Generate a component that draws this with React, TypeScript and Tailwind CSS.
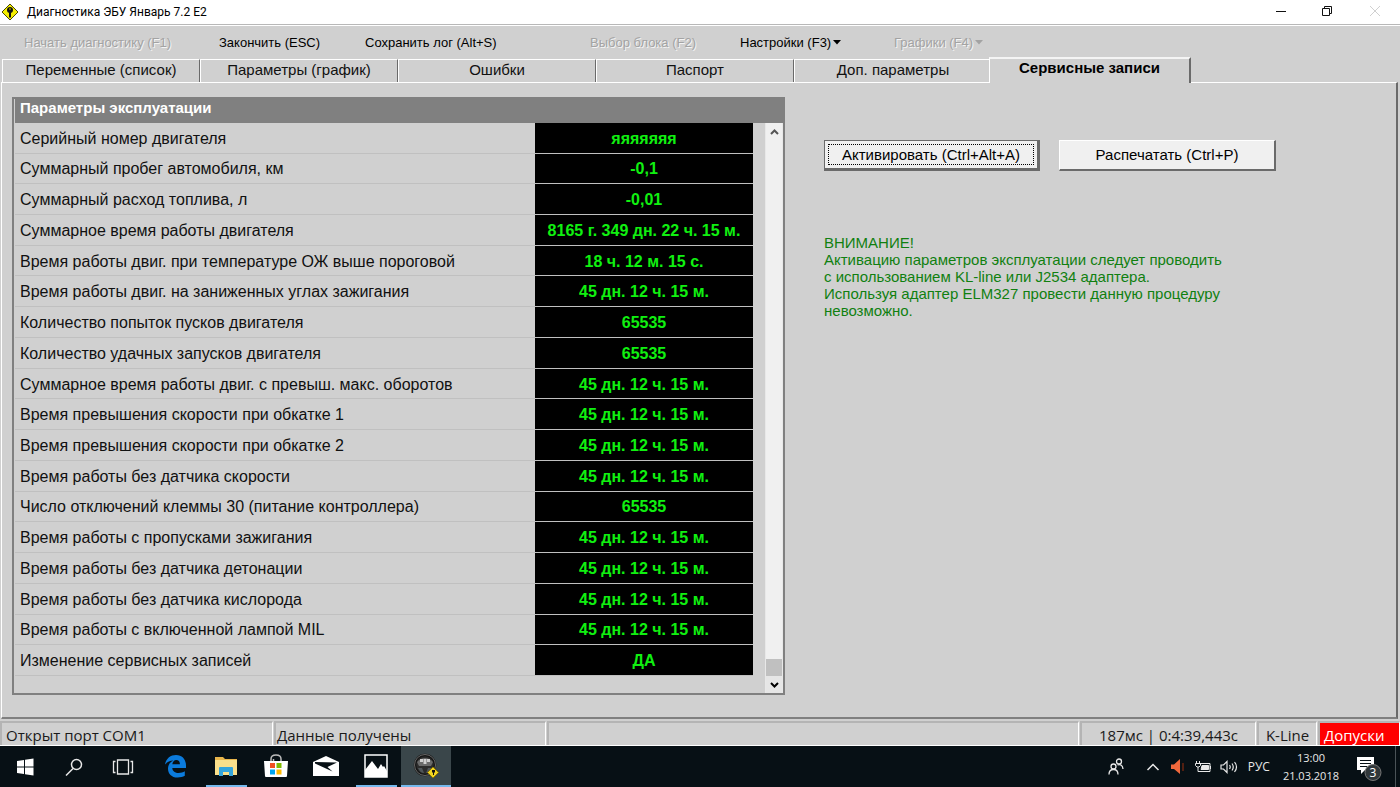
import { useState } from "react";

const sans = "font-['Liberation_Sans',Arial,sans-serif]";
const segoe = "font-['Open_Sans','Noto_Sans',sans-serif]";

const menu = [
  { label: "Начать диагностику (F1)", width: "w-[195px]", disabled: true, drop: false },
  { label: "Закончить (ESC)", width: "w-[146px]", disabled: false, drop: false },
  { label: "Сохранить лог (Alt+S)", width: "w-[225px]", disabled: false, drop: false },
  { label: "Выбор блока (F2)", width: "w-[150px]", disabled: true, drop: false },
  { label: "Настройки (F3)", width: "w-[154px]", disabled: false, drop: true },
  { label: "Графики (F4)", width: "w-[120px]", disabled: true, drop: true },
];

const tabs = [
  "Переменные (список)",
  "Параметры (график)",
  "Ошибки",
  "Паспорт",
  "Доп. параметры",
  "Сервисные записи",
];

const rows = [
  ["Серийный номер двигателя", "яяяяяяя"],
  ["Суммарный пробег автомобиля, км", "-0,1"],
  ["Суммарный расход топлива, л", "-0,01"],
  ["Суммарное время работы двигателя", "8165 г. 349 дн. 22 ч. 15 м."],
  ["Время работы двиг. при температуре ОЖ выше пороговой", "18 ч. 12 м. 15 с."],
  ["Время работы двиг. на заниженных углах зажигания", "45 дн. 12 ч. 15 м."],
  ["Количество попыток пусков двигателя", "65535"],
  ["Количество удачных запусков двигателя", "65535"],
  ["Суммарное время работы двиг. с превыш. макс. оборотов", "45 дн. 12 ч. 15 м."],
  ["Время превышения скорости при обкатке 1", "45 дн. 12 ч. 15 м."],
  ["Время превышения скорости при обкатке 2", "45 дн. 12 ч. 15 м."],
  ["Время работы без датчика скорости", "45 дн. 12 ч. 15 м."],
  ["Число отключений клеммы 30 (питание контроллера)", "65535"],
  ["Время работы с пропусками зажигания", "45 дн. 12 ч. 15 м."],
  ["Время работы без датчика детонации", "45 дн. 12 ч. 15 м."],
  ["Время работы без датчика кислорода", "45 дн. 12 ч. 15 м."],
  ["Время работы с включенной лампой MIL", "45 дн. 12 ч. 15 м."],
  ["Изменение сервисных записей", "ДА"],
];

function AppIcon() {
  return (
    <svg width="18" height="18" viewBox="0 0 18 18" aria-hidden="true">
      <path d="M9 1 17 9 9 17 1 9Z" fill="#f4ee00" stroke="#4a4800" strokeWidth="1" />
      <circle cx="9" cy="7" r="3" fill="#111" />
      <path d="M8 8h2v6l-1 1-1-1Z" fill="#111" />
      <circle cx="9" cy="6" r="1" fill="#8a8600" />
    </svg>
  );
}

function TitleBar() {
  return (
    <header className="flex h-[24px] items-center bg-white pl-[1px] font-['Roboto','Noto_Sans',sans-serif] text-black">
      <AppIcon />
      <h1 className="ml-[8px] text-[12px] leading-[16px]">Диагностика ЭБУ Январь 7.2 E2</h1>
      <div className="ml-auto flex pb-[3px]">
        <button aria-label="Свернуть" className="flex w-[46px] items-center justify-center">
          <svg width="12" height="12" viewBox="0 0 12 12">
            <path d="M1 6.500h10" stroke="#111" />
          </svg>
        </button>
        <button aria-label="Развернуть" className="flex w-[46px] items-center justify-center">
          <svg width="12" height="12" viewBox="0 0 12 12" fill="none" stroke="#111">
            <path d="M1.500 3.500h7v7h-7zM3.500 3.500v-2h7v7h-2" />
          </svg>
        </button>
        <button aria-label="Закрыть" className="flex w-[50px] items-center justify-center">
          <svg width="12" height="12" viewBox="0 0 12 12" stroke="#d0d0d0">
            <path d="M1 1l10 10M11 1 1 11" />
          </svg>
        </button>
      </div>
    </header>
  );
}

function MenuBar() {
  return (
    <nav className="flex h-[32px] items-center border-t border-white pt-[2px] pl-[24px] text-[13px] leading-[16px]">
      {menu.map((item) => (
        <div key={item.label} className={item.width}>
          <button
            disabled={item.disabled}
            className="flex items-center gap-[2px] whitespace-nowrap text-black disabled:text-[#a3a3a3] disabled:[text-shadow:1px_1px_0_#f4f4f4]"
          >
            {item.label}
            {item.drop && (
              <svg width="8" height="5" viewBox="0 0 8 5" fill="currentColor" aria-hidden="true">
                <path d="M0 0h8L4 4.500Z" />
              </svg>
            )}
          </button>
        </div>
      ))}
    </nav>
  );
}

function Tabs({ active, onSelect }: { active: number; onSelect: (i: number) => void }) {
  return (
    <div role="tablist" className="flex h-[25px] items-end pl-[2px] text-[15px] leading-[18px]">
      {tabs.map((tab, i) =>
        i === active ? (
          <button
            key={tab}
            role="tab"
            aria-selected="true"
            onClick={() => onSelect(i)}
            className="z-10 -mb-px -ml-[3px] h-[26px] w-[202px] border-t-2 border-r-2 border-l border-t-[#f4f4f4] border-r-[#6a6a6a] border-l-white bg-[#d0d0d0] pb-[6px] font-bold"
          >
            {tab}
          </button>
        ) : (
          <button
            key={tab}
            role="tab"
            aria-selected="false"
            onClick={() => onSelect(i)}
            className="h-[23px] w-[198px] border-t border-r border-l border-t-white border-r-[#6a6a6a] border-l-white pb-[3px] text-[#111]"
          >
            {tab}
          </button>
        )
      )}
    </div>
  );
}

function ScrollBar() {
  return (
    <div className="flex w-[18px] shrink-0 flex-col border-x border-[#e8e8e8] bg-[#f0f0f0]">
      <button aria-label="Вверх" className="flex h-[18px] items-center justify-center">
        <svg width="9" height="6" viewBox="0 0 9 6" fill="none" stroke="#555" strokeWidth="2">
          <path d="M1 5l3.500-3.500L8 5" />
        </svg>
      </button>
      <div className="mt-auto h-[17px] bg-[#c0c0c0]" />
      <button aria-label="Вниз" className="flex h-[17px] items-center justify-center bg-[#e6e6e6]">
        <svg width="9" height="6" viewBox="0 0 9 6" fill="none" stroke="#000" strokeWidth="2">
          <path d="M1 1l3.500 3.500L8 1" />
        </svg>
      </button>
    </div>
  );
}

function ParamsPanel() {
  return (
    <section className="w-[773px] border-2 border-[#808080] text-[16px] leading-[18px]">
      <h2 className="ml-px h-[24px] bg-[#808080] pl-[5px] text-[15px] font-bold text-white">
        Параметры эксплуатации
      </h2>
      <div className="flex">
        <div className="flex-1 pr-[12px] pb-[17px] pl-px">
          <table className="h-[553px] w-full border-collapse">
            <tbody>
              {rows.map(([label, value]) => (
                <tr key={label} className="border-b border-[#c0c0c0]">
                  <th scope="row" className="pt-[2px] pl-[5px] text-left font-normal text-[#111]">
                    {label}
                  </th>
                  <td className="w-[218px] bg-black pt-[2px] text-center font-bold whitespace-nowrap text-[#10f010]">
                    {value}
                  </td>
                </tr>
              ))}
            </tbody>
          </table>
        </div>
        <ScrollBar />
      </div>
    </section>
  );
}

function SidePanel() {
  return (
    <aside className="pt-[43px]">
      <div className="flex gap-[19px] text-[15px] leading-[18px] text-black">
        <button className="h-[31px] w-[216px] border-t border-r-[3px] border-b-[3px] border-l border-[#6a6a6a] bg-[#f0f0f0] p-[3px]">
          <span className="flex h-full items-center justify-center border border-dotted border-black">
            Активировать (Ctrl+Alt+A)
          </span>
        </button>
        <button className="h-[31px] w-[217px] border-t border-r-2 border-b-2 border-l border-t-white border-r-[#6a6a6a] border-b-[#6a6a6a] border-l-white bg-[#f0f0f0]">
          Распечатать (Ctrl+P)
        </button>
      </div>
      <p className="mt-[63px] text-[15px] leading-[17px] text-[#108010]">
        ВНИМАНИЕ!
        <br />
        Активацию параметров эксплуатации следует проводить
        <br />
        с использованием KL-line или J2534 адаптера.
        <br />
        Используя адаптер ELM327 провести данную процедуру
        <br />
        невозможно.
      </p>
    </aside>
  );
}

function StatusBar() {
  const cell = "flex items-center border-t-2 border-l-2 border-t-[#b4b4b4] border-l-[#b4b4b4] border-r border-r-white pt-[2px] whitespace-nowrap";
  return (
    <footer
      className={`${segoe} flex h-[25px] gap-px border-b border-white text-[15px] leading-[20px] text-[#1a1a1a]`}
    >
      <div className={`${cell} w-[273px] pl-[4px]`}>Открыт порт COM1</div>
      <div className={`${cell} w-[272px] pl-px`}>Данные получены</div>
      <div className={`${cell} flex-1`} />
      <div className={`${cell} w-[176px] justify-center`}>187мс | 0:4:39,443с</div>
      <div className={`${cell} w-[60px] justify-center`}>K-Line</div>
      <div className={`${cell} w-[82px] bg-[#ff0000] pl-[4px] text-white`}>Допуски</div>
    </footer>
  );
}

function FolderIcon() {
  return (
    <svg width="24" height="22" viewBox="0 0 24 22">
      <path d="M1 2h8l2 2h12v16H1Z" fill="#e8b64c" />
      <path d="M1 5h22v15H1Z" fill="#fbe08b" />
      <path d="M5 21v-8q0-1 1-1h12q1 0 1 1v8h-4v-4H9v4Z" fill="#35a5dc" />
    </svg>
  );
}

function EdgeIcon() {
  return (
    <svg width="22" height="24" viewBox="0 0 22 24" fill="#0b7bdc">
      <path d="M0 10.500C1 4.500 5.500 1 11 1c6.500 0 10 4.600 10 10.500V14H7.300c.2 3.500 3 5 6.200 5 2.500 0 4.700-.8 6.300-1.700v4.500C18 22.900 15.500 23.500 12.600 23.500 6.500 23.500 3 19.700 3 14.700 3 11 5 8 8.300 6.500 4.800 6.600 2 8.200 0 10.500ZM7.400 10.200h7.500C14.900 7.600 13.600 6 11.300 6 9 6 7.600 7.800 7.400 10.200Z" />
    </svg>
  );
}

function StoreIcon() {
  return (
    <svg width="24" height="26" viewBox="0 0 24 26">
      <path d="M7 8V6q0-4 5-4t5 4v2M9.500 8V6" fill="none" stroke="#bbb" strokeWidth="1.500" />
      <path d="M0 8h24l-1 15q0 1-1 1H2q-1 0-1-1Z" fill="#fff" />
      <path d="M6 10h5v5H6Z" fill="#f05022" />
      <path d="M12.500 10h5v5h-5Z" fill="#7fba00" />
      <path d="M6 16.500h5v5H6Z" fill="#00a4ef" />
      <path d="M12.500 16.500h5v5h-5Z" fill="#ffb900" />
    </svg>
  );
}

function MailIcon() {
  return (
    <svg width="26" height="22" viewBox="0 0 26 22">
      <path d="M0 7 13 1l13 6v14H0Z" fill="#fff" />
      <path d="M2 7 24 7.500 14.500 12l5 4.500L2 8.500Z" fill="#071015" />
    </svg>
  );
}

function PhotosIcon() {
  return (
    <svg width="24" height="24" viewBox="0 0 24 24">
      <path d="M1 1h22v22H1Z" fill="#071015" stroke="#fff" strokeWidth="1.500" />
      <path d="M1 16 8 7l6 8 3-5 2 3 1-1 3 5v6H1Z" fill="#fff" />
    </svg>
  );
}

function WheelIcon() {
  return (
    <svg width="26" height="26" viewBox="0 0 26 26">
      <circle cx="12" cy="12" r="10" fill="#2c2c2c" stroke="#151515" strokeWidth="2.500" />
      <circle cx="12" cy="12" r="10.500" fill="none" stroke="#666" />
      <path d="M4 9q8-8 16 0l-2 4H6Z" fill="#6a6a6a" />
      <path d="M7 6h3v3H7zM14 6h3v3h-3zM10.500 6h3v5h-3z" fill="#d0d0d0" />
      <path d="M5 15h4l2 5q-4 0-6-5ZM19 15h-4l-2 5q4 0 6-5Z" fill="#4f5558" />
      <path d="M20 14l5.500 5.500L20 25l-5.500-5.500Z" fill="#f1d321" stroke="#8a7400" />
      <path d="M19 17h3v2l-1 1v2h-1v-2l-1-1Z" fill="#111" />
    </svg>
  );
}

const pinned = [
  { name: "Microsoft Edge", icon: <EdgeIcon />, state: "idle" },
  { name: "Проводник", icon: <FolderIcon />, state: "open" },
  { name: "Microsoft Store", icon: <StoreIcon />, state: "idle" },
  { name: "Почта", icon: <MailIcon />, state: "idle" },
  { name: "Фотографии", icon: <PhotosIcon />, state: "open" },
  { name: "Диагностика", icon: <WheelIcon />, state: "active" },
];

function Taskbar() {
  const shell = "flex w-[49px] items-center justify-center";
  return (
    <div className={`${segoe} flex h-[41px] bg-[#071015] text-[#e8e8e8]`}>
      <button aria-label="Пуск" className={shell}>
        <svg width="18" height="18" viewBox="0 0 18 18" fill="#fff">
          <path d="M1 3l7-1v6.500H1zM9 1.800 17.500.5v8H9zM1 9.500h7V16l-7-1zM9 9.500h8.500v8L9 16.200z" />
        </svg>
      </button>
      <button aria-label="Поиск" className={shell}>
        <svg width="18" height="18" viewBox="0 0 18 18" fill="none" stroke="#e8e8e8" strokeWidth="1.500">
          <circle cx="11.500" cy="6.500" r="5" />
          <path d="M8 10.500 1 17.500" />
        </svg>
      </button>
      <button aria-label="Представление задач" className={shell}>
        <svg width="22" height="18" viewBox="0 0 22 18" fill="none" stroke="#e8e8e8" strokeWidth="1.300">
          <path d="M5.500 2h11v14h-11zM3.500 3.500h-2v11h2M18.500 3.500h2v11h-2" />
        </svg>
      </button>
      <div className="ml-[4px] flex">
        {pinned.map((app) => (
          <button
            key={app.name}
            aria-label={app.name}
            className={`flex w-[50px] flex-col items-center ${app.state === "active" ? "bg-[#3a464a]" : ""}`}
          >
            <span className="flex flex-1 items-center">{app.icon}</span>
            {app.state === "open" && <span className="h-[2px] w-[41px] bg-[#76b9ed]" />}
            {app.state === "active" && <span className="h-[2px] w-full bg-[#76b9ed]" />}
            {app.state === "idle" && <span className="h-[2px]" />}
          </button>
        ))}
      </div>

      {/* Tray */}
      <div className="ml-auto flex items-center">
        <button aria-label="Люди" className="mr-[22px]">
          <svg width="16" height="18" viewBox="0 0 16 18" fill="none" stroke="#e8e8e8" strokeWidth="1.300">
            <circle cx="5.500" cy="8.500" r="2.500" />
            <path d="M1 16.500q0-5 4.500-5t4.500 5" />
            <circle cx="11" cy="3.500" r="2.500" />
            <path d="M9.500 7q5-1.500 5.500 4" />
          </svg>
        </button>
        <button aria-label="Скрытые значки" className="mr-[11px]">
          <svg width="14" height="8" viewBox="0 0 14 8" fill="none" stroke="#e8e8e8" strokeWidth="1.500">
            <path d="M1.500 7 7 1.500 12.500 7" />
          </svg>
        </button>
        <svg width="14" height="16" viewBox="0 0 14 16" className="mr-[10px]" aria-hidden="true">
          <path d="M0 5.500h3L9 0v15L3 10H0Z" fill="#f0683c" />
          <path d="M12 4v8" stroke="#6b2411" strokeWidth="1.500" />
        </svg>
        <svg width="17" height="12" viewBox="0 0 17 12" className="mr-[8px]" fill="none" stroke="#e8e8e8" aria-hidden="true">
          <path d="M5 2.500h10v8H4M15.500 5v3" />
          <path d="M7 4.500h6.500v4H6Z" fill="#e8e8e8" />
          <path d="M1.500 0v2.500M4.500 0v2.500M.5 2.500h5v2L4 6H2L.5 4.500ZM3 6v4.500h2" />
        </svg>
        <svg width="18" height="14" viewBox="0 0 18 14" className="mr-[10px]" fill="none" stroke="#e8e8e8" strokeWidth="1.200" aria-hidden="true">
          <path d="M1 5h2.500L7 1.500v11L3.500 9H1ZM9.500 5q1.500 2 0 4M12 3.500q2.500 3.500 0 7M14.500 2q4 5 0 10" />
        </svg>
        <span className="text-[12px] leading-[18px]">РУС</span>
        <time className="ml-[13px] text-center text-[11px] leading-[18px]">
          13:00
          <br />
          21.03.2018
        </time>
        <button aria-label="Уведомления" className="mr-[13px] ml-[17px]">
          <svg width="26" height="28" viewBox="0 0 26 28">
            <path d="M1 4h17v13H9l-4 4v-4H1Z" fill="#fff" />
            <path d="M4 7.500h11M4 10.500h11M4 13.500h7" stroke="#071015" />
            <circle cx="17" cy="19.500" r="8" fill="#30373a" stroke="#777" />
            <text x="17" y="24" textAnchor="middle" fontSize="12" fill="#fff">
              3
            </text>
          </svg>
        </button>
        <span className="mr-[4px] h-[41px] w-px bg-[#4a5357]" />
      </div>
    </div>
  );
}

export default function App() {
  const [active, setActive] = useState(5);

  return (
    <div className={`${sans} flex min-h-screen flex-col bg-[#d0d0d0]`}>
      <TitleBar />
      <div className="h-px bg-[#b8b8b8]" />
      <MenuBar />
      <Tabs active={active} onSelect={setActive} />
      <main className="mr-[2px] ml-px flex flex-1 items-start gap-[39px] border-t border-r-2 border-b-2 border-l border-t-white border-r-[#6a6a6a] border-b-[#808080] border-l-white pt-[14px] pb-[22px] pl-[10px]">
        <ParamsPanel />
        <SidePanel />
      </main>
      <div className="h-[2px]" />
      <StatusBar />
      <Taskbar />
    </div>
  );
}
